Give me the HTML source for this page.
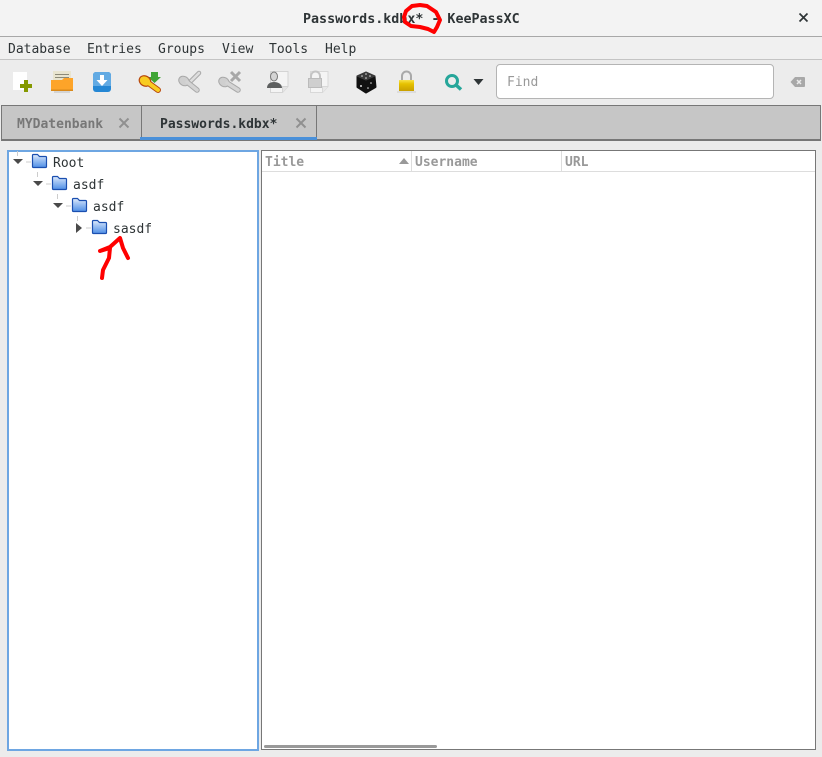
<!DOCTYPE html>
<html><head><meta charset="utf-8"><style>
html,body{margin:0;padding:0;width:822px;height:757px;overflow:hidden;background:#ececec}
body{position:relative;font-family:"DejaVu Sans Mono","Liberation Mono",monospace;font-size:13px;color:#2e3436}
.a{position:absolute}
.t{position:absolute;white-space:pre;line-height:16px}
svg{position:absolute;overflow:visible}
</style></head><body>
<div class="a" style="left:0;top:0;width:822px;height:36px;background:#f3f3f3;border-bottom:1px solid #a8a8a8"></div>
<div class="t" style="left:303px;top:12px;font-weight:bold;font-size:13.33px;color:#2e3436">Passwords.kdbx* - KeePassXC</div>
<svg style="left:799px;top:13px" width="10" height="10"><path d="M0.500 0.500L8.500 8.500M8.500 0.500L0.500 8.500" stroke="#2e3436" stroke-width="1.700"/></svg>

<div class="a" style="left:0;top:37px;width:822px;height:22px;background:#f0f0f0;border-bottom:1px solid #c4c4c4"></div>
<div class="t" style="left:8px;top:42px">Database</div>
<div class="t" style="left:87px;top:42px">Entries</div>
<div class="t" style="left:158px;top:42px">Groups</div>
<div class="t" style="left:222px;top:42px">View</div>
<div class="t" style="left:269px;top:42px">Tools</div>
<div class="t" style="left:325px;top:42px">Help</div>

<!-- new -->
<svg style="left:0;top:62px" width="40" height="40"><rect x="13" y="10" width="14" height="18" fill="#fff"/><rect x="20" y="22" width="12" height="4" fill="#859900"/><rect x="24" y="18" width="4" height="12" fill="#859900"/></svg>
<!-- open -->
<svg style="left:45px;top:62px" width="40" height="40"><rect x="8" y="9" width="18" height="12" fill="#e8e4cf"/><path d="M10 12.500h14M10 15.500h14M10 18.500h14" stroke="#8c8a78" stroke-width="1"/><path d="M6 18h11l2-2h9v13H6z" fill="#fda429"/><rect x="6" y="27.500" width="22" height="1.500" fill="#d98a1c"/><rect x="9" y="29" width="16" height="2" fill="#d4d4d4"/></svg>
<!-- save -->
<svg style="left:85px;top:62px" width="40" height="40"><rect x="8" y="10" width="18" height="20" rx="3" fill="#2587d4"/><path d="M8 13a3 3 0 0 1 3-3h12a3 3 0 0 1 3 3v11H8z" fill="#62aae3"/><path d="M15 13h4v5h3.500l-5.500 6-5.500-6H15z" fill="#fff"/></svg>
<!-- key green -->
<svg style="left:125px;top:62px" width="40" height="40"><path d="M26 10h7v5h3l-6.500 6-6.500-6h3z" fill="#3fa535"/><path d="M22 20L33 28" stroke="#b9480c" stroke-width="6" stroke-linecap="round"/><ellipse cx="20" cy="19" rx="6" ry="5" fill="#f8cc22" stroke="#b9480c" stroke-width="1.200" transform="rotate(30 20 19)"/><path d="M22 20L33 28" stroke="#f8cc22" stroke-width="4" stroke-linecap="round"/></svg>
<!-- key gray -->
<svg style="left:165px;top:62px" width="40" height="40"><path d="M25 20L34 11" stroke="#a8a8a8" stroke-width="4.500" stroke-linecap="round"/><path d="M25 20L34 11" stroke="#dedede" stroke-width="2.500" stroke-linecap="round"/><path d="M22 20L32 28" stroke="#a8a8a8" stroke-width="5.500" stroke-linecap="round"/><ellipse cx="19" cy="19" rx="5.500" ry="4.500" fill="#cfcfcf" stroke="#a8a8a8" transform="rotate(30 19 19)"/><path d="M22 20L32 28" stroke="#d4d4d4" stroke-width="3.500" stroke-linecap="round"/></svg>
<!-- key x -->
<svg style="left:205px;top:62px" width="40" height="40"><path d="M26 10l9 9M35 10l-9 9" stroke="#a8a8a8" stroke-width="3"/><path d="M22 21L33 28" stroke="#a8a8a8" stroke-width="5.500" stroke-linecap="round"/><ellipse cx="19" cy="20" rx="5.500" ry="4.500" fill="#cfcfcf" stroke="#a8a8a8" transform="rotate(30 19 20)"/><path d="M22 21L33 28" stroke="#d4d4d4" stroke-width="3.500" stroke-linecap="round"/></svg>
<!-- user doc -->
<svg style="left:250px;top:62px" width="40" height="40"><path d="M20.500 9.500h17.500v15l-5.500 6h-12z" fill="#f4f4f4" stroke="#d4d4d4"/><path d="M38 24.500h-5.500v6" fill="#e4e4e4" stroke="#d4d4d4"/><ellipse cx="24" cy="14.500" rx="3.500" ry="4.500" fill="#d4d4d4" stroke="#777"/><path d="M17 26c0-4 3-6 7-6s8 2 8 6z" fill="#5d5f5f"/></svg>
<!-- lock doc -->
<svg style="left:290px;top:62px" width="40" height="40"><path d="M20.500 9.500h17.500v15l-5.500 6h-12z" fill="#f4f4f4" stroke="#d8d8d8"/><path d="M38 24.500h-5.500v6" fill="#e8e8e8" stroke="#d8d8d8"/><path d="M21 17v-3a4.500 4.500 0 0 1 9 0v3" fill="none" stroke="#c4c4c4" stroke-width="2"/><rect x="18.500" y="16.500" width="13" height="9" fill="#cfcfcf" stroke="#bbb"/></svg>
<!-- dice -->
<svg style="left:345px;top:62px" width="40" height="40"><path d="M21 11l8.500 3.500 1 10.500-9.500 5.500-8.500-5.500 0-10.500z" fill="#111" stroke="#111" stroke-width="2" stroke-linejoin="round"/><path d="M21 10l9 4-9 4-9-4z" fill="#3a3a3a" stroke="#3a3a3a" stroke-linejoin="round"/><g fill="#ddd"><circle cx="21" cy="12" r=".8"/><circle cx="17" cy="14" r=".8"/><circle cx="25" cy="14" r=".8"/><circle cx="21" cy="16" r=".8"/><circle cx="16" cy="24" r="1"/><circle cx="26" cy="21" r=".8"/><circle cx="23" cy="26" r=".8"/></g></svg>
<!-- lock -->
<svg style="left:385px;top:62px" width="40" height="40"><defs><linearGradient id="g" x1="0" y1="0" x2="0" y2="1"><stop offset="0" stop-color="#f8e24a"/><stop offset=".35" stop-color="#e6c200"/><stop offset="1" stop-color="#c9a000"/></linearGradient></defs><path d="M17 19v-5a4.500 4.500 0 0 1 9 0v5" fill="none" stroke="#a9a9a9" stroke-width="2"/><rect x="14" y="18" width="15" height="11" fill="url(#g)"/><rect x="12" y="29.500" width="19" height="1" fill="#ccc"/></svg>
<!-- search -->
<svg style="left:435px;top:62px" width="40" height="40"><circle cx="17" cy="19" r="5.500" fill="none" stroke="#26a69a" stroke-width="3"/><path d="M21 23l5 4.500" stroke="#26a69a" stroke-width="3.500"/></svg>
<svg style="left:473px;top:78px" width="12" height="8"><path d="M0.500 1h10l-5 6z" fill="#2e3436"/></svg>

<div class="a" style="left:496px;top:64px;width:276px;height:33px;background:#fff;border:1px solid #b4b4b4;border-radius:4px"></div>
<div class="t" style="left:507px;top:75px;color:#999">Find</div>
<svg style="left:790px;top:76px" width="16" height="12"><path d="M5 1h9a1 1 0 0 1 1 1v8a1 1 0 0 1-1 1H5L0.500 6z" fill="#a8a8a8"/><path d="M7 4l4 4M11 4l-4 4" stroke="#ececec" stroke-width="1.500"/></svg>

<!-- tabs -->
<div class="a" style="left:1px;top:105px;width:818px;height:33px;background:#c6c6c6;border:solid #777;border-width:1px 1px 2px 1px"></div>
<div class="a" style="left:141px;top:106px;width:174px;height:31px;background:#c6c6c6;border-left:1px solid #777;border-right:1px solid #777"></div>
<div class="a" style="left:140px;top:137px;width:177px;height:3px;background:#4a90d9"></div>
<div class="t" style="left:17px;top:117px;font-weight:bold;color:#777">MYDatenbank</div>
<svg style="left:119px;top:118px" width="10" height="10"><path d="M0.500 0.500L9.500 9.500M9.500 0.500L0.500 9.500" stroke="#909090" stroke-width="2"/></svg>
<div class="t" style="left:160px;top:117px;font-weight:bold;color:#2e3436">Passwords.kdbx*</div>
<svg style="left:296px;top:118px" width="10" height="10"><path d="M0.500 0.500L9.500 9.500M9.500 0.500L0.500 9.500" stroke="#909090" stroke-width="2"/></svg>

<!-- left panel -->
<div class="a" style="left:7px;top:150px;width:248px;height:597px;background:#fff;border:2px solid #6ea6e2"></div>
<svg style="left:0;top:145px" width="180" height="110">
<defs><linearGradient id="fg" x1="0" y1="0" x2="0" y2="1"><stop offset="0" stop-color="#e4eefc"/><stop offset=".35" stop-color="#a8c8f4"/><stop offset="1" stop-color="#4f8fe6"/></linearGradient></defs>
<path d="M17.500 6v5M37.500 27v5M57.500 49v5M77.500 71v5" stroke="#ccc" stroke-width="1"/>
<path d="M26 17h5M46 39h5M66 61h5M86 83h5" stroke="#ccc" stroke-width="1"/>
<path d="M13 14h10l-5 5zM33 36h10l-5 5zM53 58h10l-5 5z" fill="#4a4a4a"/>
<path d="M76 78l6 5-6 5z" fill="#4a4a4a"/>
<g fill="url(#fg)" stroke="#1b4fb0" stroke-width="1.200">
<path d="M32.500 21.500v-11a1 1 0 0 1 1-1h4l2 2h6a1 1 0 0 1 1 1v9a1 1 0 0 1-1 1h-12a1 1 0 0 1-1-1z"/>
<path d="M52.500 43.500v-11a1 1 0 0 1 1-1h4l2 2h6a1 1 0 0 1 1 1v9a1 1 0 0 1-1 1h-12a1 1 0 0 1-1-1z"/>
<path d="M72.500 65.500v-11a1 1 0 0 1 1-1h4l2 2h6a1 1 0 0 1 1 1v9a1 1 0 0 1-1 1h-12a1 1 0 0 1-1-1z"/>
<path d="M92.500 87.500v-11a1 1 0 0 1 1-1h4l2 2h6a1 1 0 0 1 1 1v9a1 1 0 0 1-1 1h-12a1 1 0 0 1-1-1z"/>
</g>
</svg>
<div class="t" style="left:53px;top:156px">Root</div>
<div class="t" style="left:73px;top:178px">asdf</div>
<div class="t" style="left:93px;top:200px">asdf</div>
<div class="t" style="left:113px;top:222px">sasdf</div>

<!-- right panel -->
<div class="a" style="left:261px;top:150px;width:553px;height:598px;background:#fff;border:1px solid #777"></div>
<div class="a" style="left:262px;top:171px;width:553px;height:1px;background:#ddd"></div>
<div class="a" style="left:411px;top:151px;width:1px;height:20px;background:#ddd"></div>
<div class="a" style="left:561px;top:151px;width:1px;height:20px;background:#ddd"></div>
<div class="t" style="left:265px;top:155px;font-weight:bold;color:#999">Title</div>
<div class="t" style="left:415px;top:155px;font-weight:bold;color:#999">Username</div>
<div class="t" style="left:565px;top:155px;font-weight:bold;color:#999">URL</div>
<svg style="left:399px;top:158px" width="11" height="7"><path d="M0 6h10L5 0z" fill="#999"/></svg>
<div class="a" style="left:264px;top:745px;width:173px;height:3px;background:#999;border-radius:2px"></div>

<!-- red marks -->
<svg style="left:0;top:0" width="822" height="757"><g fill="none" stroke="#f00" stroke-width="4" stroke-linejoin="round" stroke-linecap="round">
<path d="M404 17L406 11L412 6L420 5L427 6L436 12L440 20L437 27L434 32L428 29L420 27L411 26L405 22Z"/>
<path d="M102 278L103 270L109 258L110 248L100 251L110 247L120 238L123 248L128 258"/>
</g></svg>
</body></html>
